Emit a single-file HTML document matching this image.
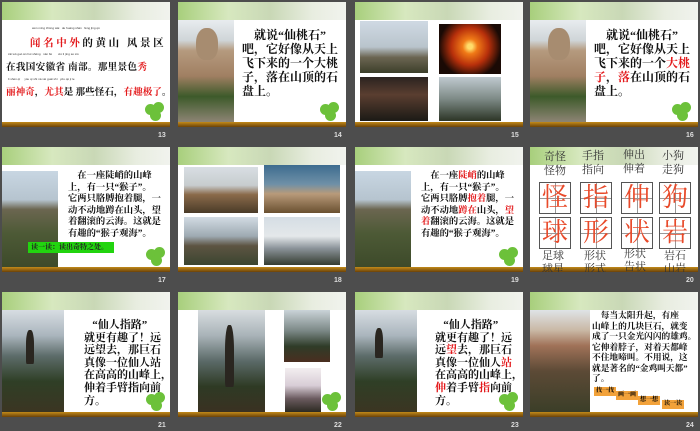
<!DOCTYPE html>
<html><head><meta charset="utf-8"><style>
*{margin:0;padding:0;box-sizing:border-box}
body{width:700px;height:431px;background:#4d4d4d;position:relative;overflow:hidden;font-family:"Liberation Serif","Noto Serif CJK SC",serif}
.s{position:absolute;width:168px;height:125px;background:#fff;overflow:hidden}
.h{position:absolute;left:0;top:0;width:168px;height:18px;background:linear-gradient(90deg,#a8cf7c 0%,#d7e8bf 30%,#c9d8b6 55%,#e8ede0 80%,#f1f3ee 100%)}
.b{position:absolute;left:0;top:120px;width:168px;height:5px;background:linear-gradient(#c28a1a,#6b4208)}
.n{position:absolute;color:#ddd;font:bold 7px "Liberation Sans",sans-serif}
.cl{position:absolute;width:22px;height:20px}
.cl i{position:absolute;width:11px;height:11px;border-radius:50%;background:#6cc13a}
.t{position:absolute;font-weight:bold;color:#111;white-space:nowrap}
.r{color:#e3191b}
.p{position:absolute}
.g{position:absolute;font-size:11px;color:#333;line-height:14px;white-space:nowrap}
.box{position:absolute;width:32px;height:32px;border:1px solid #555;color:#e84a2a;font-size:26px;line-height:30px;text-align:center;background:linear-gradient(#999,#999) center/100% 1px no-repeat,linear-gradient(#999,#999) center/1px 100% no-repeat}
.py{position:absolute;font:3px sans-serif;color:#333;white-space:nowrap}
</style></head><body>

<!-- Row 1 -->
<div class="s" style="left:2px;top:2px">
 <div class="h"></div>
 <div class="py" style="left:30px;top:24px">wén míng zhōng wài &nbsp; de huáng shān &nbsp; fēng jǐng qū</div>
 <div class="t" style="left:28px;top:33px;font-size:10.5px;letter-spacing:2.6px"><span class="r">闻名中外</span>的黄山 风景区</div>
 <div class="py" style="left:6px;top:50px">zài wǒ guó ān huī shěng &nbsp; nán bù &nbsp; &nbsp; &nbsp; xiù lì jīng sè xiù</div>
 <div class="t" style="left:4px;top:57px;font-size:9.6px;letter-spacing:0.3px">在我国安徽省 南部。那里景色<span class="r">秀</span></div>
 <div class="py" style="left:6px;top:75px">lì shén qí &nbsp; &nbsp; yóu qí shì nà xiē guài shí &nbsp; yǒu qù jí le</div>
 <div class="t" style="left:4px;top:82px;font-size:9.6px"><span class="r">丽神奇</span>，<span class="r">尤其</span>是 那些怪石，<span class="r">有趣极了</span>。</div>
 <div class="cl" style="left:143px;top:100px"><i style="left:0;top:2px"></i><i style="left:8px;top:0"></i><i style="left:5px;top:8px"></i></div>
 <div class="b"></div>
</div>
<div class="n" style="left:158px;top:132px">13</div>

<div class="s" style="left:178px;top:2px">
 <div class="h"></div>
 <div class="p" style="left:0;top:18px;width:56px;height:102px;background:linear-gradient(#e8ecef 0%,#cfd5d8 20%,#b59a7e 30%,#a07f62 55%,#3d5a2a 75%,#8d8474 100%)"></div>
 <div class="p" style="left:18px;top:26px;width:22px;height:32px;border-radius:45% 45% 40% 40%;background:#a78c70"></div>
 <div class="t" style="left:64px;top:26px;font-size:12px;line-height:14px">&nbsp; &nbsp; 就说“仙桃石”<br>吧，它好像从天上<br>飞下来的一个大桃<br>子，落在山顶的石<br>盘上。</div>
 <div class="cl" style="left:142px;top:100px"><i style="left:0;top:2px"></i><i style="left:8px;top:0"></i><i style="left:5px;top:8px"></i></div>
 <div class="b"></div>
</div>
<div class="n" style="left:334px;top:132px">14</div>

<div class="s" style="left:355px;top:2px">
 <div class="h"></div>
 <div class="p" style="left:5px;top:19px;width:68px;height:52px;background:linear-gradient(#cfd9e3,#b9c4cc 50%,#6b6552 70%,#3c3f2a)"></div>
 <div class="p" style="left:84px;top:22px;width:62px;height:50px;background:radial-gradient(circle at 50% 45%,#ffdc6a 0 6%,#f07a17 18%,#b8300b 45%,#1a0a05 75%)"></div>
 <div class="p" style="left:5px;top:75px;width:68px;height:44px;background:linear-gradient(#2b2320,#5a3e30 40%,#1b1a16)"></div>
 <div class="p" style="left:84px;top:75px;width:62px;height:44px;background:linear-gradient(#bfc9cf,#7d8a86 50%,#2c3526)"></div>
 <div class="b"></div>
</div>
<div class="n" style="left:511px;top:132px">15</div>

<div class="s" style="left:530px;top:2px">
 <div class="h"></div>
 <div class="p" style="left:0;top:18px;width:56px;height:102px;background:linear-gradient(#e8ecef 0%,#cfd5d8 20%,#b59a7e 30%,#a07f62 55%,#3d5a2a 75%,#8d8474 100%)"></div>
 <div class="p" style="left:18px;top:26px;width:22px;height:32px;border-radius:45% 45% 40% 40%;background:#a78c70"></div>
 <div class="t" style="left:64px;top:26px;font-size:12px;line-height:14px">&nbsp; &nbsp; 就说“仙桃石”<br>吧，它好像从天上<br>飞下来的一个<span class="r">大桃</span><br><span class="r">子</span>，<span class="r">落</span>在山顶的石<br>盘上。</div>
 <div class="cl" style="left:142px;top:100px"><i style="left:0;top:2px"></i><i style="left:8px;top:0"></i><i style="left:5px;top:8px"></i></div>
 <div class="b"></div>
</div>
<div class="n" style="left:686px;top:132px">16</div>

<!-- Row 2 -->
<div class="s" style="left:2px;top:147px">
 <div class="h"></div>
 <div class="p" style="left:0;top:24px;width:56px;height:96px;background:linear-gradient(#c8d6e2 0%,#b6c4cf 30%,#6b6650 40%,#4d5a36 65%,#3d4a2a)"></div>
 <div class="t" style="left:66px;top:24px;font-size:9.3px;line-height:11.5px">&nbsp; &nbsp; 在一座陡峭的山峰<br>上，有一只“猴子”。<br>它两只胳膊抱着腿，一<br>动不动地蹲在山头，望<br>着翻滚的云海。这就是<br>有趣的“猴子观海”。</div>
 <div class="p" style="left:26px;top:95px;width:86px;height:11px;background:#22d40f;color:#222;font-weight:bold;font-size:7px;line-height:11px;padding-left:3px;white-space:nowrap">读一读：读出奇特之处。</div>
 <div class="cl" style="left:144px;top:100px"><i style="left:0;top:2px"></i><i style="left:8px;top:0"></i><i style="left:5px;top:8px"></i></div>
 <div class="b"></div>
</div>
<div class="n" style="left:158px;top:277px">17</div>

<div class="s" style="left:178px;top:147px">
 <div class="h"></div>
 <div class="p" style="left:6px;top:20px;width:74px;height:46px;background:linear-gradient(#d8dee3,#c7ccce 40%,#8a6a4a 60%,#4a3b28)"></div>
 <div class="p" style="left:86px;top:18px;width:76px;height:48px;background:linear-gradient(#3d6c8f,#6f90a7 40%,#b89a7a 60%,#6a5030)"></div>
 <div class="p" style="left:6px;top:70px;width:74px;height:48px;background:linear-gradient(#d2dbe3,#9eaab2 40%,#5d5442 60%,#3b4530)"></div>
 <div class="p" style="left:86px;top:70px;width:76px;height:48px;background:linear-gradient(#d5dde4,#e4e8ea 40%,#8c949a 65%,#353c30)"></div>
 <div class="b"></div>
</div>
<div class="n" style="left:334px;top:277px">18</div>

<div class="s" style="left:355px;top:147px">
 <div class="h"></div>
 <div class="p" style="left:0;top:24px;width:56px;height:96px;background:linear-gradient(#c8d6e2 0%,#b6c4cf 30%,#6b6650 40%,#4d5a36 65%,#3d4a2a)"></div>
 <div class="t" style="left:66px;top:24px;font-size:9.3px;line-height:11.5px">&nbsp; &nbsp; 在一座<span class="r">陡峭</span>的山峰<br>上，有一只“猴子”。<br>它两只胳膊<span class="r">抱着</span>腿，一<br>动不动地<span class="r">蹲在</span>山头，<span class="r">望</span><br><span class="r">着</span>翻滚的云海。这就是<br>有趣的“猴子观海”。</div>
 <div class="cl" style="left:144px;top:100px"><i style="left:0;top:2px"></i><i style="left:8px;top:0"></i><i style="left:5px;top:8px"></i></div>
 <div class="b"></div>
</div>
<div class="n" style="left:511px;top:277px">19</div>

<div class="s" style="left:530px;top:147px">
 <div class="h"></div>
 <div class="g" style="left:14px;top:3px">奇怪<br>怪物</div>
 <div class="g" style="left:52px;top:2px">手指<br>指向</div>
 <div class="g" style="left:93px;top:1px">伸出<br>伸着</div>
 <div class="g" style="left:132px;top:2px">小狗<br>走狗</div>
 <div class="box" style="left:9px;top:35px">怪</div>
 <div class="box" style="left:50px;top:35px">指</div>
 <div class="box" style="left:91px;top:35px">伸</div>
 <div class="box" style="left:129px;top:35px">狗</div>
 <div class="box" style="left:9px;top:70px">球</div>
 <div class="box" style="left:50px;top:70px">形</div>
 <div class="box" style="left:91px;top:70px">状</div>
 <div class="box" style="left:129px;top:70px">岩</div>
 <div class="b"></div>
 <div class="g" style="left:12px;top:103px;line-height:13px">足球<br>球星</div>
 <div class="g" style="left:54px;top:103px;line-height:13px">形状<br>形式</div>
 <div class="g" style="left:94px;top:101px;line-height:13px">形状<br>告状</div>
 <div class="g" style="left:134px;top:103px;line-height:13px">岩石<br>山岩</div>
</div>
<div class="n" style="left:686px;top:277px">20</div>

<!-- Row 3 -->
<div class="s" style="left:2px;top:292px">
 <div class="h"></div>
 <div class="p" style="left:0;top:18px;width:62px;height:102px;background:linear-gradient(#d7dde2 0%,#aab5bd 25%,#5d6c6a 45%,#2f3f26 70%,#3b3522)"></div>
 <div class="p" style="left:24px;top:38px;width:8px;height:34px;border-radius:40% 40% 10% 10%;background:#2a2620"></div>
 <div class="t" style="left:82px;top:27px;font-size:11px;line-height:12.6px">&nbsp; &nbsp;“仙人指路”<br>就更有趣了！远<br>远望去，那巨石<br>真像一位仙人站<br>在高高的山峰上，<br>伸着手臂指向前<br>方。</div>
 <div class="cl" style="left:144px;top:100px"><i style="left:0;top:2px"></i><i style="left:8px;top:0"></i><i style="left:5px;top:8px"></i></div>
 <div class="b"></div>
</div>
<div class="n" style="left:158px;top:422px">21</div>

<div class="s" style="left:178px;top:292px">
 <div class="h"></div>
 <div class="p" style="left:20px;top:18px;width:67px;height:102px;background:linear-gradient(#d8dde0 0%,#a9b3b8 25%,#5b6a68 50%,#2e3a24 75%,#3a3122)"></div>
 <div class="p" style="left:47px;top:33px;width:9px;height:62px;border-radius:40% 40% 10% 10%;background:#2a2620"></div>
 <div class="p" style="left:106px;top:18px;width:46px;height:52px;background:linear-gradient(#cad3d8,#7b8886 40%,#2f3c28 70%,#4a2e20)"></div>
 <div class="p" style="left:107px;top:76px;width:36px;height:44px;background:linear-gradient(#f3eef0,#d8cdd6 40%,#6a5a5e 70%,#2c2a22)"></div>
 <div class="cl" style="left:144px;top:100px"><i style="left:0;top:2px"></i><i style="left:8px;top:0"></i><i style="left:5px;top:8px"></i></div>
 <div class="b"></div>
</div>
<div class="n" style="left:334px;top:422px">22</div>

<div class="s" style="left:355px;top:292px">
 <div class="h"></div>
 <div class="p" style="left:0;top:18px;width:62px;height:102px;background:linear-gradient(#d7dde2 0%,#aab5bd 25%,#5d6c6a 45%,#2f3f26 70%,#3b3522)"></div>
 <div class="p" style="left:20px;top:36px;width:8px;height:30px;border-radius:40% 40% 10% 10%;background:#2a2620"></div>
 <div class="t" style="left:80px;top:27px;font-size:11px;line-height:12.6px">&nbsp; &nbsp;“仙人指路”<br>就更有趣了！远<br>远<span class="r">望</span>去，那巨石<br>真像一位仙人<span class="r">站</span><br>在高高的山峰上，<br><span class="r">伸</span>着手臂<span class="r">指</span>向前<br>方。</div>
 <div class="cl" style="left:144px;top:100px"><i style="left:0;top:2px"></i><i style="left:8px;top:0"></i><i style="left:5px;top:8px"></i></div>
 <div class="b"></div>
</div>
<div class="n" style="left:511px;top:422px">23</div>

<div class="s" style="left:530px;top:292px">
 <div class="h"></div>
 <div class="p" style="left:0;top:18px;width:60px;height:102px;background:linear-gradient(#dfe3e6 0%,#c9b8a5 20%,#a07258 35%,#5c4a36 60%,#3b3e28)"></div>
 <div class="t" style="left:62px;top:18px;font-size:8.7px;line-height:10.5px">&nbsp; &nbsp; 每当太阳升起，有座<br>山峰上的几块巨石，就变<br>成了一只金光闪闪的雄鸡。<br>它伸着脖子，对着天都峰<br>不住地啼叫。不用说，这<br>就是著名的“金鸡叫天都”<br>了。</div>
 <div class="p" style="left:64px;top:95px;width:22px;height:9px;background:#f2a23a;font-size:6px;font-weight:bold;text-align:center;line-height:9px">找一找</div>
 <div class="p" style="left:86px;top:99px;width:22px;height:9px;background:#f2a23a;font-size:6px;font-weight:bold;text-align:center;line-height:9px">画一画</div>
 <div class="p" style="left:108px;top:104px;width:22px;height:9px;background:#f2a23a;font-size:6px;font-weight:bold;text-align:center;line-height:9px">想一想</div>
 <div class="p" style="left:132px;top:108px;width:22px;height:9px;background:#f2a23a;font-size:6px;font-weight:bold;text-align:center;line-height:9px">读一读</div>
 <div class="b"></div>
</div>
<div class="n" style="left:686px;top:422px">24</div>

</body></html>
